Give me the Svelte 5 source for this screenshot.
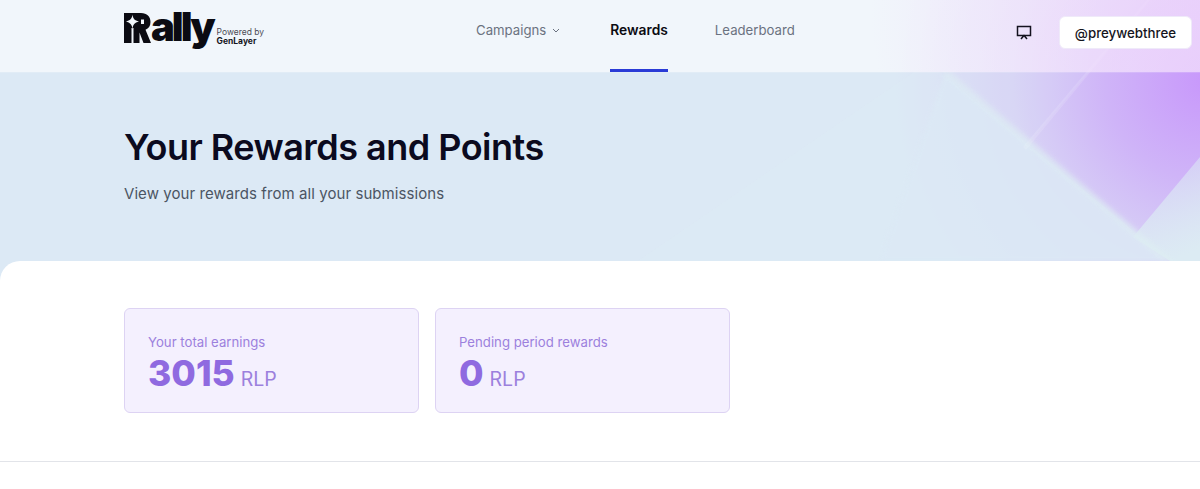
<script lang="ts">
	const links = [
		{ label: 'Campaigns', caret: true },
		{ label: 'Rewards', active: true },
		{ label: 'Leaderboard' }
	];

	const stats = [
		{ label: 'Your total earnings', value: '3015', unit: 'RLP' },
		{ label: 'Pending period rewards', value: '0', unit: 'RLP' }
	];
</script>

<div class="page">
	<div class="top">
		<svg class="facets" viewBox="0 0 1200 261" width="1200" height="261" aria-hidden="true">
			<defs>
				<linearGradient id="corner" x1="0.300" y1="0" x2="0.600" y2="1">
					<stop offset="0" stop-color="#dce8f5" stop-opacity="0.45" />
					<stop offset="1" stop-color="#dcebf3" stop-opacity="1" />
				</linearGradient>
				<filter id="soft"><feGaussianBlur stdDeviation="2" /></filter>
			</defs>
			<polygon points="638,261 914,72 940,72 1170,261" fill="#e0ecf6" opacity="0.28" />
			<polygon points="940,0 1150,0 1023,150 940,72" fill="#dfe6f6" opacity="0.14" />
			<polygon points="945,72 1170,261 880,261" fill="#dce9f5" opacity="0.8" filter="url(#soft)" />
			<polygon points="1200,157 1133,237 1170,261 1200,261" fill="url(#corner)" />
			<polygon points="1023,147 1026,150 1150,0 1147,0" fill="#ffffff" opacity="0.13" />
			<polygon points="940,72 952,72 1175,261 1162,261" fill="#dff0f2" opacity="0.38" filter="url(#soft)" />
		</svg>

		<header class="header">
			<a class="logo" href="#top">
				<svg class="mark" viewBox="0 0 27 30" width="27" height="30" aria-hidden="true">
					<path
						fill-rule="evenodd"
						fill="#0b0b12"
						d="M0 0H17C23 0 26.500 3.500 26.500 9C26.500 13 24.500 15.500 21.500 16.800L27 30H19.500L15.500 19.500V30H9.500V15H7.500V30H0ZM8.500 1.500C9 5.500 10.500 7.500 15 8.500C10.500 9.500 9 11.500 8.500 16C8 11.500 6 9.500 2 8.500C6 7.500 8 5.500 8.500 1.500ZM17 6.500H20V11H17Z"
					/>
				</svg>
				<span class="wordmark">ally</span>
				<span class="powered">
					<span>Powered by</span>
					<strong>GenLayer</strong>
				</span>
			</a>

			<nav class="nav">
				{#each links as link}
					<a class="nav-link" class:active={link.active} href="#top">
						{link.label}
						{#if link.caret}
							<svg viewBox="0 0 8 5" width="8" height="5" aria-hidden="true">
								<path d="M1 1l3 3 3-3" fill="none" stroke="currentColor" stroke-width="1" />
							</svg>
						{/if}
					</a>
				{/each}
			</nav>

			<div class="actions">
				<button class="icon-btn" aria-label="Presentation">
					<svg viewBox="0 0 16 15" width="16" height="15" aria-hidden="true">
						<path
							d="M1.500 1.500H14.500V10.500H1.500ZM5 14L8 10.500L11 14"
							fill="none"
							stroke="#14121f"
							stroke-width="1.500"
						/>
					</svg>
				</button>
				<button class="account">@preywebthree</button>
			</div>
		</header>

		<section class="hero">
			<h1>Your Rewards and Points</h1>
			<p>View your rewards from all your submissions</p>
		</section>
	</div>

	<main class="panel">
		<div class="stats">
			{#each stats as stat}
				<div class="stat">
					<span class="stat-label">{stat.label}</span>
					<div class="stat-value">
						<strong>{stat.value}</strong>
						<span>{stat.unit}</span>
					</div>
				</div>
			{/each}
		</div>
	</main>
</div>

<style>
	:global(body) {
		background: #fff;
	}

	.page {
		font-family: Inter, 'Liberation Sans', sans-serif;
		height: 489px;
		overflow: hidden;
		background: #fff;
	}

	.top {
		position: relative;
		height: 285px;
		background:
			radial-gradient(circle 310px at 1205px 80px, #c898fb 0%, #cfb4f8 32%, #d8d4f5 62%, rgba(220, 233, 245, 0) 100%),
			#dce9f5;
	}

	.facets {
		position: absolute;
		inset: 0;
	}

	.header {
		position: relative;
		height: 72px;
		box-sizing: border-box;
		display: flex;
		align-items: center;
		padding: 0 8px 7px 124px;
		background:
			radial-gradient(circle 340px at 1210px 0, rgba(232, 200, 250, 0.65), rgba(232, 200, 250, 0)),
			rgba(255, 255, 255, 0.6);
		box-shadow: 0 1px 0 rgba(255, 255, 255, 0.15);
	}

	.logo {
		display: flex;
		align-items: flex-start;
		width: 352px;
		height: 40px;
		color: #0b0b12;
		text-decoration: none;
	}

	.mark {
		flex: none;
	}

	.wordmark {
		font-size: 40px;
		font-weight: 900;
		line-height: 40px;
		letter-spacing: -3px;
		margin-top: -6px;
	}

	.powered {
		display: flex;
		flex-direction: column;
		font-size: 8.500px;
		line-height: 9px;
		margin: 15px 0 0 4px;
		color: #4b4b55;
		white-space: nowrap;
	}

	.powered strong {
		color: #14141c;
		font-size: 8.500px;
		font-weight: 700;
	}

	.nav {
		display: flex;
		gap: 47px;
		height: 72px;
		margin-top: 7px;
	}

	.nav-link {
		display: flex;
		align-items: center;
		gap: 6px;
		box-sizing: border-box;
		height: 72px;
		padding-bottom: 9px;
		font-size: 13.200px;
		color: #6b7280;
		text-decoration: none;
		border-bottom: 3px solid transparent;
	}

	.nav-link svg {
		margin-right: 3px;
	}

	.nav-link.active {
		color: #0b0b12;
		font-weight: 600;
		font-size: 13.800px;
		border-bottom-color: #2a3bd6;
	}

	.actions {
		margin-left: auto;
		display: flex;
		align-items: center;
		gap: 27px;
	}

	.icon-btn {
		display: flex;
		padding: 0;
		margin-top: -1px;
		background: none;
		border: none;
	}

	.account {
		width: 133px;
		height: 33px;
		padding: 0;
		font-family: inherit;
		font-size: 13.300px;
		font-weight: 500;
		color: #14141c;
		background: #fff;
		border: 1px solid #efeaf9;
		border-radius: 6px;
	}

	.hero {
		position: relative;
		padding: 53px 124px 0;
	}

	h1 {
		margin: 0;
		font-size: 36px;
		font-weight: 600;
		line-height: 44px;
		letter-spacing: -0.520px;
		color: #0b0a1e;
	}

	p {
		margin: 13px 0 0;
		font-size: 15px;
		line-height: 24px;
		letter-spacing: 0.070px;
		color: #4b5563;
	}

	.panel {
		position: relative;
		height: 201px;
		box-sizing: border-box;
		margin-top: -24px;
		padding: 47px 124px 0;
		background: #fff;
		border-top-left-radius: 20px;
		border-bottom: 1px solid #e2e4e9;
	}

	.stats {
		display: flex;
		gap: 16px;
	}

	.stat {
		width: 295px;
		height: 105px;
		box-sizing: border-box;
		padding: 23px 23px;
		display: flex;
		flex-direction: column;
		background: #f4f0fe;
		border: 1px solid #ddd3f3;
		border-radius: 6px;
		color: #8f6ae0;
	}

	.stat-label {
		font-size: 13.200px;
		line-height: 20px;
		color: #9c80dd;
	}

	.stat-value {
		display: flex;
		align-items: baseline;
		gap: 6px;
		line-height: 44px;
	}

	.stat-value strong {
		font-size: 35.500px;
		font-weight: 800;
	}

	.stat-value span {
		font-size: 19.500px;
		color: #9c80dd;
	}
</style>
